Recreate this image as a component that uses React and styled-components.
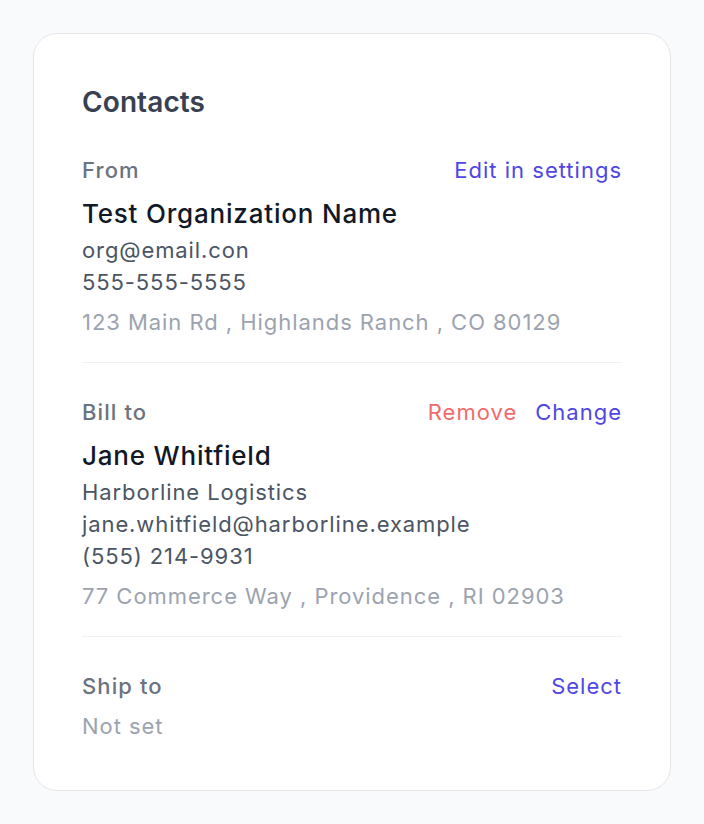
import React from 'react';
import styled, { createGlobalStyle } from 'styled-components';

const GlobalStyle = createGlobalStyle`
  html, body {
    margin: 0;
    padding: 0;
    background-color: #f9fafb;
  }
  body {
    font-family: 'Inter', 'Liberation Sans', sans-serif;
    -webkit-font-smoothing: antialiased;
  }
`;

const Page = styled.div`
  padding: 33px;
`;

const Card = styled.section`
  background-color: #ffffff;
  border: 1.5px solid #e5e7eb;
  border-radius: 24px;
  padding: 48px;
`;

const Title = styled.h2`
  margin: 0 0 32px;
  font-size: 28px;
  line-height: 40px;
  font-weight: 600;
  letter-spacing: 0.1px;
  color: #374151;
`;

const Section = styled.div`
  padding: ${(props) => (props.$first ? '0' : '33px')} 0 ${(props) => (props.$last ? '0' : '24px')};
  border-bottom: ${(props) => (props.$last ? 'none' : '1px solid #f0f1f3')};
`;

const Header = styled.div`
  display: flex;
  justify-content: space-between;
  align-items: center;
  height: 32px;
`;

const Label = styled.span`
  font-size: 22px;
  font-weight: 500;
  letter-spacing: 1.1px;
  color: #6b7280;
`;

const Actions = styled.div`
  display: flex;
  gap: 18px;
`;

const Action = styled.button`
  background: none;
  border: none;
  padding: 0;
  font-family: inherit;
  font-size: 22px;
  font-weight: 400;
  letter-spacing: 1px;
  cursor: pointer;
  color: ${(props) => (props.$danger ? '#f06b6b' : '#4f46e5')};
`;

const Name = styled.div`
  margin-top: 10px;
  font-size: 26px;
  line-height: 36px;
  font-weight: 500;
  letter-spacing: 0.8px;
  color: #111827;
`;

const Details = styled.div`
  margin-top: 2px;
`;

const Detail = styled.div`
  font-size: 22px;
  line-height: 32px;
  letter-spacing: 0.9px;
  color: #4b5563;
`;

const Address = styled.div`
  margin-top: 8px;
  font-size: 22px;
  line-height: 32px;
  letter-spacing: 0.95px;
  color: #9ca3af;
`;

const Empty = styled.div`
  margin-top: 8px;
  font-size: 22px;
  line-height: 32px;
  letter-spacing: 0.95px;
  color: #9ca3af;
`;

const ContactBlock = ({ name, lines, address }) => (
  <>
    <Name>{name}</Name>
    <Details>
      {lines.map((line) => (
        <Detail key={line}>{line}</Detail>
      ))}
    </Details>
    <Address>{address}</Address>
  </>
);

const App = () => {
  return (
    <React.Fragment>
      <GlobalStyle />
      <Page>
        <Card>
          <Title>Contacts</Title>

          <Section $first>
            <Header>
              <Label>From</Label>
              <Actions>
                <Action type="button">Edit in settings</Action>
              </Actions>
            </Header>
            <ContactBlock
              name="Test Organization Name"
              lines={['org@email.con', '555-555-5555']}
              address="123 Main Rd , Highlands Ranch , CO 80129"
            />
          </Section>

          <Section>
            <Header>
              <Label>Bill to</Label>
              <Actions>
                <Action type="button" $danger>
                  Remove
                </Action>
                <Action type="button">Change</Action>
              </Actions>
            </Header>
            <ContactBlock
              name="Jane Whitfield"
              lines={[
                'Harborline Logistics',
                'jane.whitfield@harborline.example',
                '(555) 214-9931',
              ]}
              address="77 Commerce Way , Providence , RI 02903"
            />
          </Section>

          <Section $last>
            <Header>
              <Label>Ship to</Label>
              <Actions>
                <Action type="button">Select</Action>
              </Actions>
            </Header>
            <Empty>Not set</Empty>
          </Section>
        </Card>
      </Page>
    </React.Fragment>
  );
};

export default App;
